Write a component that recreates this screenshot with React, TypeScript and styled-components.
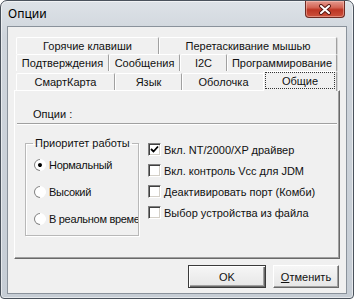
import React from "react";
import styled, { createGlobalStyle } from "styled-components";

const GlobalStyle = createGlobalStyle`
  html, body {
    margin: 0;
    padding: 0;
    background: #ffffff;
  }
  body {
    font-family: "Liberation Sans", Arial, sans-serif;
    font-size: 11px;
    color: #000;
  }
`;

type Tab = { label: string; width: number; selected?: boolean };

const tabRows: Tab[][] = [
  [
    { label: "Горячие клавиши", width: 143 },
    { label: "Перетаскивание мышью", width: 178 },
  ],
  [
    { label: "Подтверждения", width: 93 },
    { label: "Сообщения", width: 71 },
    { label: "I2C", width: 47 },
    { label: "Программирование", width: 110 },
  ],
  [
    { label: "СмартКарта", width: 99 },
    { label: "Язык", width: 67 },
    { label: "Оболочка", width: 83 },
    { label: "Общие", width: 74, selected: true },
  ],
];

const priorities = [
  { label: "Нормальный", checked: true },
  { label: "Высокий", checked: false },
  { label: "В реальном времени", checked: false },
];

const options = [
  { label: "Вкл. NT/2000/XP драйвер", checked: true },
  { label: "Вкл. контроль Vcc для JDM", checked: false },
  { label: "Деактивировать порт (Комби)", checked: false },
  { label: "Выбор устройства из файла", checked: false },
];

const App: React.FC = () => {
  return (
    <>
      <GlobalStyle />
      <Window>
        <TitleBar>
          <Title>Опции</Title>
          <CloseButton>
            <svg width="14" height="11" viewBox="0 0 14 11">
              <path
                d="M3 2 L11 9 M11 2 L3 9"
                stroke="#5a1a14"
                strokeWidth="4"
                strokeLinecap="round"
              />
              <path
                d="M3 2 L11 9 M11 2 L3 9"
                stroke="#ffffff"
                strokeWidth="2"
                strokeLinecap="round"
              />
            </svg>
          </CloseButton>
        </TitleBar>

        <Client>
          <TabControl>
            {tabRows.map((row, i) => (
              <TabRow key={i} $last={i === tabRows.length - 1}>
                {row.map((tab) => (
                  <TabItem
                    key={tab.label}
                    $width={tab.width}
                    $selected={!!tab.selected}
                  >
                    {tab.selected ? (
                      <FocusRect>{tab.label}</FocusRect>
                    ) : (
                      tab.label
                    )}
                  </TabItem>
                ))}
              </TabRow>
            ))}

            <Page>
              <SectionLabel>Опции :</SectionLabel>
              <Separator />
              <PageBody>
                <GroupBox>
                  <Legend>Приоритет работы</Legend>
                  <RadioList>
                    {priorities.map((p) => (
                      <RadioRow key={p.label}>
                        <Radio $checked={p.checked} />
                        <RadioLabel>{p.label}</RadioLabel>
                      </RadioRow>
                    ))}
                  </RadioList>
                </GroupBox>

                <CheckList>
                  {options.map((o) => (
                    <CheckRow key={o.label}>
                      <CheckBox>
                        {o.checked && (
                          <svg width="9" height="9" viewBox="0 0 9 9">
                            <path
                              d="M1 4 L3.5 6.5 L8 1.5"
                              fill="none"
                              stroke="#000"
                              strokeWidth="1.8"
                            />
                          </svg>
                        )}
                      </CheckBox>
                      <span>{o.label}</span>
                    </CheckRow>
                  ))}
                </CheckList>
              </PageBody>
            </Page>
          </TabControl>

          <ButtonRow>
            <DialogButton $default $width={78}>
              OK
            </DialogButton>
            <DialogButton $width={66}>
              <u>О</u>тменить
            </DialogButton>
          </ButtonRow>
        </Client>
      </Window>
    </>
  );
};

// окно
const Window = styled.div`
  width: 354px;
  height: 299px;
  box-sizing: border-box;
  border: 1px solid #4a525c;
  border-radius: 7px 7px 4px 4px;
  background: linear-gradient(180deg, #dde2e7 0%, #cfd5dc 12%, #c6cdd5 100%);
  box-shadow: inset 0 0 0 1px rgba(255, 255, 255, 0.55);
  padding: 0 6px 6px 6px;
  display: flex;
  flex-direction: column;
  overflow: hidden;
`;

const TitleBar = styled.div`
  height: 25px;
  display: flex;
  align-items: flex-start;
  flex-shrink: 0;
`;

const Title = styled.div`
  font-family: "Noto Sans", "Liberation Sans", sans-serif;
  font-size: 12px;
  color: #000;
  padding: 5px 0 0 1px;
  line-height: 16px;
`;

const CloseButton = styled.div`
  margin-left: auto;
  margin-right: 2px;
  width: 40px;
  height: 17px;
  box-sizing: border-box;
  border: 1px solid #6e2a22;
  border-top: none;
  border-radius: 0 0 4px 4px;
  background: linear-gradient(
    180deg,
    #e49a8f 0%,
    #d46656 40%,
    #bd3624 55%,
    #cc513c 100%
  );
  box-shadow: inset 0 0 0 1px rgba(255, 210, 200, 0.45);
  display: flex;
  align-items: center;
  justify-content: center;
`;

const Client = styled.div`
  flex: 1;
  background: #f0f0f0;
  border: 1px solid #8a929b;
  display: flex;
  flex-direction: column;
  padding: 10px 6px 5px 6px;
`;

// вкладки
const TabControl = styled.div`
  display: flex;
  flex-direction: column;
`;

const TabRow = styled.div<{ $last: boolean }>`
  display: flex;
  align-items: flex-end;
  height: ${(p) => (p.$last ? "19px" : "17px")};
  padding-left: 2px;
`;

const TabItem = styled.div<{ $width: number; $selected: boolean }>`
  width: ${(p) => p.$width}px;
  height: ${(p) => (p.$selected ? "20px" : "17px")};
  box-sizing: border-box;
  display: flex;
  align-items: center;
  justify-content: center;
  background: #f0f0f0;
  border-top: 1px solid #ffffff;
  border-left: 1px solid #ffffff;
  border-right: 1px solid #a0a0a0;
  box-shadow: 1px 0 0 #d4d4d4;
  white-space: nowrap;
  color: #111;
  margin-left: ${(p) => (p.$selected ? "-2px" : "0")};
  margin-bottom: ${(p) => (p.$selected ? "-1px" : "0")};
  position: ${(p) => (p.$selected ? "relative" : "static")};
  z-index: ${(p) => (p.$selected ? 1 : 0)};
  border-radius: 2px 2px 0 0;
`;

const FocusRect = styled.span`
  display: flex;
  align-items: center;
  justify-content: center;
  box-sizing: border-box;
  width: calc(100% - 4px);
  height: 15px;
  margin-top: -2px;
  outline: 1px dotted #333;
`;

const Page = styled.div`
  height: 169px;
  box-sizing: border-box;
  border: 1px solid #ffffff;
  border-right-color: #696969;
  border-bottom-color: #696969;
  box-shadow: inset -1px -1px 0 #a0a0a0;
  background: #f0f0f0;
  display: flex;
  flex-direction: column;
`;

const SectionLabel = styled.div`
  padding: 17px 0 0 18px;
  line-height: 13px;
  color: #111;
`;

const Separator = styled.div`
  margin: 2px 2px 0 2px;
  height: 1px;
  background: #a0a0a0;
  border-bottom: 1px solid #ffffff;
`;

const PageBody = styled.div`
  display: flex;
  align-items: flex-start;
  padding: 12px 0 0 10px;
`;

const GroupBox = styled.fieldset`
  margin: 0;
  width: 114px;
  height: 99px;
  box-sizing: border-box;
  border: 1px solid #b8b8b8;
  box-shadow: 1px 1px 0 #ffffff, inset 1px 1px 0 #ffffff;
  padding: 0 0 0 8px;
  min-inline-size: 0;
  overflow: hidden;
`;

const Legend = styled.legend`
  padding: 0 2px;
  margin-left: -1px;
  line-height: 13px;
  color: #111;
`;

const RadioList = styled.div`
  display: flex;
  flex-direction: column;
  padding-top: 1px;
`;

const RadioRow = styled.div`
  display: flex;
  align-items: center;
  height: 27px;
  white-space: nowrap;
  overflow: hidden;
`;

const Radio = styled.span<{ $checked: boolean }>`
  flex-shrink: 0;
  width: 12px;
  height: 12px;
  box-sizing: border-box;
  border-radius: 50%;
  border: 1px solid;
  border-color: #808080 #ffffff #ffffff #808080;
  transform: rotate(-45deg);
  background: #ffffff;
  display: flex;
  align-items: center;
  justify-content: center;

  &::after {
    content: "";
    width: 4px;
    height: 4px;
    border-radius: 50%;
    background: ${(p) => (p.$checked ? "#000" : "transparent")};
  }
`;

const RadioLabel = styled.span`
  margin-left: 3px;
  letter-spacing: -0.3px;
  color: #111;
`;

const CheckList = styled.div`
  display: flex;
  flex-direction: column;
  margin: 2px 0 0 9px;
`;

const CheckRow = styled.div`
  display: flex;
  align-items: center;
  height: 21px;
  gap: 3px;
  white-space: nowrap;
  color: #111;
`;

const CheckBox = styled.span`
  width: 13px;
  height: 13px;
  box-sizing: border-box;
  background: #ffffff;
  border: 1px solid;
  border-color: #808080 #ffffff #ffffff #808080;
  box-shadow: inset 1px 1px 0 #404040, inset -1px -1px 0 #d4d0c8;
  display: flex;
  align-items: center;
  justify-content: center;
`;

// кнопки
const ButtonRow = styled.div`
  display: flex;
  justify-content: flex-end;
  gap: 7px;
  margin-top: 6px;
  padding-right: 1px;
`;

const DialogButton = styled.div<{ $default?: boolean; $width: number }>`
  width: ${(p) => p.$width}px;
  height: 23px;
  box-sizing: border-box;
  display: flex;
  align-items: center;
  justify-content: center;
  background: linear-gradient(180deg, #f6f6f6 0%, #e6e6e6 100%);
  border: 1px solid ${(p) => (p.$default ? "#3a3a3a" : "#ffffff")};
  border-right-color: ${(p) => (p.$default ? "#3a3a3a" : "#696969")};
  border-bottom-color: ${(p) => (p.$default ? "#3a3a3a" : "#696969")};
  box-shadow: ${(p) =>
    p.$default
      ? "inset 1px 1px 0 #ffffff, inset -1px -1px 0 #696969, inset -2px -2px 0 #a0a0a0"
      : "inset -1px -1px 0 #a0a0a0"};
  color: #111;

  u {
    text-decoration: underline;
  }
`;

export default App;
